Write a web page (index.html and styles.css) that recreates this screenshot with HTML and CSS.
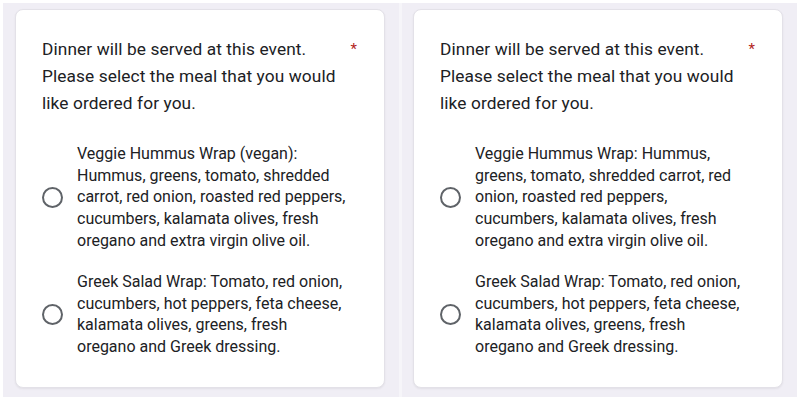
FILE: index.html
```html
<!DOCTYPE html>
<html lang="en">
<head>
<meta charset="utf-8">
<title>Meal selection</title>
<link rel="stylesheet" href="styles.css">
</head>
<body>
<div class="page">
  <section class="panel panel-left">
    <div class="card">
      <div class="question">
        <div class="title">Dinner will be served at this event. Please select the meal that you would like ordered for you.</div>
        <span class="required">*</span>
      </div>
      <div class="options">
        <label class="option">
          <span class="radio"></span>
          <span class="option-text">Veggie Hummus Wrap (vegan): Hummus, greens, tomato, shredded carrot, red onion, roasted red peppers, cucumbers, kalamata olives, fresh oregano and extra virgin olive oil.</span>
        </label>
        <label class="option">
          <span class="radio"></span>
          <span class="option-text">Greek Salad Wrap: Tomato, red onion, cucumbers, hot peppers, feta cheese, kalamata olives, greens, fresh oregano and Greek dressing.</span>
        </label>
      </div>
    </div>
  </section>
  <section class="panel panel-right">
    <div class="card">
      <div class="question">
        <div class="title">Dinner will be served at this event. Please select the meal that you would like ordered for you.</div>
        <span class="required">*</span>
      </div>
      <div class="options">
        <label class="option">
          <span class="radio"></span>
          <span class="option-text">Veggie Hummus Wrap: Hummus, greens, tomato, shredded carrot, red onion, roasted red peppers, cucumbers, kalamata olives, fresh oregano and extra virgin olive oil.</span>
        </label>
        <label class="option">
          <span class="radio"></span>
          <span class="option-text">Greek Salad Wrap: Tomato, red onion, cucumbers, hot peppers, feta cheese, kalamata olives, greens, fresh oregano and Greek dressing.</span>
        </label>
      </div>
    </div>
  </section>
</div>
</body>
</html>
```
FILE: styles.css
```css
* { box-sizing: border-box; }
html, body { margin: 0; padding: 0; background: #ffffff; }
body {
  font-family: Roboto, "Liberation Sans", Arial, sans-serif;
  color: #202124;
  width: 799px;
  height: 401px;
  overflow: hidden;
}
.page {
  display: flex;
  padding: 3px 2px 4px 3px;
  height: 401px;
}
.panel {
  background: #f0eef5;
  flex: 1;
  display: flex;
}
.panel-left { padding: 6px 14px 9px 12px; }
.panel-right {
  padding: 6px 14px 9px 11px;
  border-left: 3px solid #f6f5f9;
}
.card {
  flex: 1;
  background: #ffffff;
  border: 1px solid #e3e1e8;
  border-radius: 8px;
  box-shadow: 0 1px 2px rgba(60, 64, 67, 0.08);
  padding: 26px 26px 0 26px;
}
.question {
  display: flex;
  justify-content: space-between;
  align-items: flex-start;
}
.title {
  width: 305px;
  font-size: 17.3px;
  line-height: 27px;
  letter-spacing: 0.1px;
}
.required {
  color: #b3261e;
  font-size: 15px;
  line-height: 20px;
  margin-right: 1px;
  margin-top: 3px;
}
.options {
  display: flex;
  flex-direction: column;
  gap: 19.5px;
  margin-top: 26px;
}
.option {
  display: flex;
  align-items: center;
  gap: 14px;
}
.radio {
  flex: none;
  width: 21px;
  height: 21px;
  border: 2px solid #5f6368;
  border-radius: 50%;
}
.option-text {
  width: 272px;
  font-size: 16px;
  line-height: 21.7px;
}
```
